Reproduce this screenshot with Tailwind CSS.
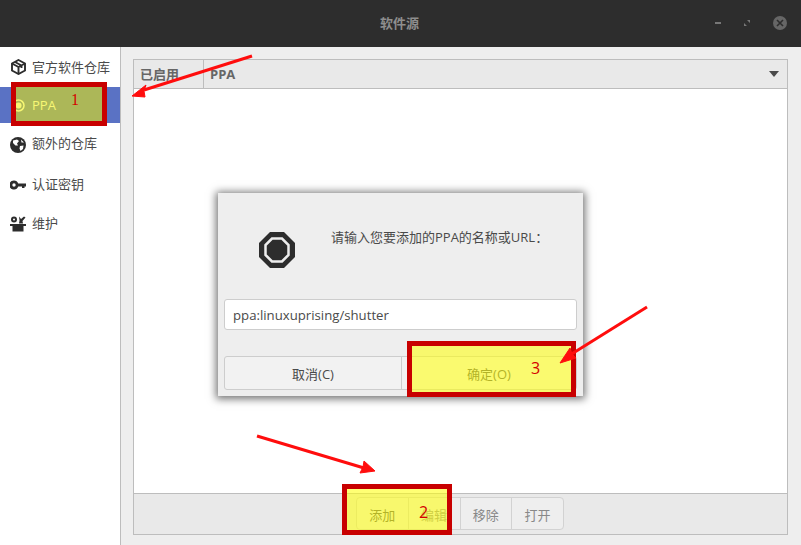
<!DOCTYPE html>
<html><head><meta charset="utf-8"><script src="https://cdn.jsdelivr.net/npm/@tailwindcss/browser@4"></script></head>
<body class="m-0">
<div class="relative w-[801px] h-[545px] overflow-hidden bg-[#eeeeee] font-['Open_Sans','Noto_Sans_CJK_SC',sans-serif] text-[13px] text-[#4a4a4a]">
  <header class="h-[47px] bg-[#2d2d2d] flex items-center justify-center relative">
    <span class="text-[#8e8e8e] font-bold text-[13px] mr-[2px]">软件源</span>
    <div class="absolute right-[14px] top-[16px] flex items-center gap-[25px]">
      <div class="w-[6px] h-[2px] bg-[#777]"></div>
      <svg class="-ml-[2px]" width="6" height="6" viewBox="0 0 6 6"><path d="M0 6V3L3 6ZM6 0V3L3 0Z" fill="#777"/></svg>
      <div class="-ml-[2px] w-[14px] h-[14px] rounded-full bg-[#666] flex items-center justify-center"><svg width="8" height="8" viewBox="0 0 8 8"><path d="M1 1L7 7M7 1L1 7" stroke="#2d2d2d" stroke-width="1.6"/></svg></div>
    </div>
  </header>
  <div class="flex h-[498px]">
    <nav class="w-[121px] bg-white border-r border-[#bdbdbd] shrink-0">
      <div class="h-[40px] flex items-center pl-[10px] gap-[6px]">
        <svg class="ml-[1px] -mt-[1px]" width="15" height="16" viewBox="0 0 15 16" fill="none" stroke="#2d2d2d" stroke-width="1.9"><path d="M7.500 1L14 4.500V11.500L7.500 15L1 11.500V4.500Z"/><path d="M1 4.500L7.500 8L14 4.500M7.500 8V15M4 3L10.500 6.500V9"/></svg>
        <span class="pt-[2px]">官方软件仓库</span>
      </div>
      <div class="h-[36px] flex items-center pl-[10px] gap-[6px] bg-[#5a72c4] text-white">
        <svg class="ml-[1px]" width="15" height="15" viewBox="0 0 15 15"><circle cx="7.500" cy="7.500" r="3" fill="white"/><circle cx="7.500" cy="7.500" r="5.500" fill="none" stroke="white" stroke-width="1.500"/></svg>
        <span class="pt-[2px]">PPA</span>
      </div>
      <div class="h-[43px] flex items-center pl-[10px] gap-[6px]">
        <svg width="16" height="16" viewBox="0 0 16 16"><circle cx="8" cy="8" r="8" fill="#2d2d2d"/><path d="M3 3.500L7 2.500L9 4L7 6.500L8 8.500L5.500 8.500L3 6ZM10 9L13.500 8.500L13 12L10.500 14L9.500 11.500ZM11 2.500L14 5.500L11.500 5.500Z" fill="white"/></svg>
        <span class="-mt-[2px]">额外的仓库</span>
      </div>
      <div class="h-[37px] flex items-center pl-[10px] gap-[6px]">
        <svg width="16" height="16" viewBox="0 0 16 16"><path d="M4 3.500A4.500 4.500 0 0 1 8.200 6.500H16V9.500H14.500V11H12V9.500H8.200A4.500 4.500 0 1 1 4 3.500ZM4 6.300A1.700 1.700 0 1 0 4 9.700A1.700 1.700 0 0 0 4 6.300Z" fill="#2d2d2d" fill-rule="evenodd"/></svg>
        <span>认证密钥</span>
      </div>
      <div class="h-[42px] flex items-center pl-[10px] gap-[6px]">
        <svg width="16" height="16" viewBox="0 0 16 16" fill="#2d2d2d"><circle cx="4" cy="3.500" r="3"/><circle cx="4" cy="3.500" r="1" fill="white"/><path d="M9 0.500L11 3L14 .5L15.500 1.500L12.500 5L13 7.500H9L9.500 4.500ZM0 8H16V10H13.500V15.500H2.500V10H0Z"/></svg>
        <span>维护</span>
      </div>
    </nav>
    <main class="flex-1 px-[12px] pt-[12px] pb-[10px]">
      <section class="h-[476px] w-[655px] border border-[#bdbdbd] flex flex-col bg-white">
        <div class="h-[29px] shrink-0 flex items-center bg-[#e9e9e9] border-b border-[#bdbdbd] font-bold text-[13px] text-[#666]">
          <div class="w-[70px] h-full flex items-center pl-[6px] pt-[2px] border-r border-[#bdbdbd]">已启用</div>
          <div class="flex-1 pl-[6px] pt-[1px]">PPA</div>
          <svg class="mr-[8px]" width="10" height="6" viewBox="0 0 10 6"><path d="M0 0H10L5 6Z" fill="#4a4a4a"/></svg>
        </div>
        <div class="flex-1"></div>
        <div class="h-[41px] shrink-0 bg-[#e9e9e9] border-t border-[#bdbdbd] flex items-center justify-center">
          <div class="flex h-[33px] w-[208px] mr-[1px] -mt-[1px] border border-[#d2d2d2] rounded-[4px] bg-[#eeeeee] text-[#888]">
            <div class="flex-1 flex items-center justify-center pt-[4px] border-r border-[#d2d2d2] text-[#4a4a4a]">添加</div>
            <div class="flex-1 flex items-center justify-center pt-[4px] border-r border-[#d2d2d2]">编辑</div>
            <div class="flex-1 flex items-center justify-center pt-[4px] border-r border-[#d2d2d2]">移除</div>
            <div class="flex-1 flex items-center justify-center pt-[4px]">打开</div>
          </div>
        </div>
      </section>
    </main>
  </div>

  <!-- dialog -->
  <div class="absolute left-[218px] top-[193px] w-[365px] h-[203px] bg-[#eeeeee] shadow-[0_1px_8px_2px_rgba(0,0,0,0.55)] flex flex-col">
    <div class="h-[106px] flex items-start">
      <svg class="ml-[41px] mt-[39px] shrink-0" width="36" height="36" viewBox="0 0 36 36"><path d="M11 0H25L36 11V25L25 36H11L0 25V11Z" fill="#2d2d2d"/><path d="M13 6.500H23L29.500 13V23L23 29.500H13L6.500 23V13Z" fill="none" stroke="#eeeeee" stroke-width="2.500"/></svg>
      <div class="ml-[36px] mt-[35px] text-[13px] whitespace-nowrap">请输入您要添加的PPA的名称或URL：</div>
    </div>
    <div class="mx-[6px] h-[31px] bg-white border border-[#cdcdcd] rounded-[3px] flex items-center pl-[8px] pt-[2px] text-[13.2px]">ppa:linuxuprising/shutter</div>
    <div class="mx-[6px] mt-[26px] h-[34px] flex border border-[#cdcdcd] rounded-[3px] bg-[#f2f2f2]">
      <div class="w-[177px] flex items-center justify-center pt-[3px] border-r border-[#cdcdcd]">取消(C)</div>
      <div class="flex-1 flex items-center justify-center pt-[3px]">确定(O)</div>
    </div>
  </div>

  <!-- annotations -->
  <div class="absolute left-[11px] top-[82px] w-[96px] h-[44px] border-[5px] border-[#c80000] bg-[#f0f000]/55"></div>
  <div class="absolute left-[71px] top-[90px] text-[16px] leading-[20px] font-medium text-[#d40000] font-['Liberation_Serif',serif]">1</div>
  <div class="absolute left-[342px] top-[484px] w-[110px] h-[51px] border-[5px] border-[#c80000] bg-[#ffff10]/58"></div>
  <div class="absolute left-[419px] top-[502px] text-[16px] leading-[20px] font-medium text-[#d40000]">2</div>
  <div class="absolute left-[407px] top-[341px] w-[169px] h-[56px] border-[5px] border-[#c80000] bg-[#ffff10]/58"></div>
  <div class="absolute left-[531px] top-[358px] text-[16px] leading-[20px] font-medium text-[#d40000]">3</div>

  <svg class="absolute left-0 top-0 pointer-events-none" width="801" height="545" viewBox="0 0 801 545">
    <g stroke="#ff0d0d" stroke-width="3" fill="#ff0d0d">
      <path d="M252 56L144 90"/><path d="M132 96L146 85L144 91L145 97Z" stroke-width="1"/>
      <path d="M257 436L364 468"/><path d="M375 471L360 473L363 467L364 461Z" stroke-width="1"/>
      <path d="M647 307L570 355"/><path d="M560 363L570 348L572 354L576 358Z" stroke-width="1"/>
    </g>
  </svg>
</div>
</body></html>
